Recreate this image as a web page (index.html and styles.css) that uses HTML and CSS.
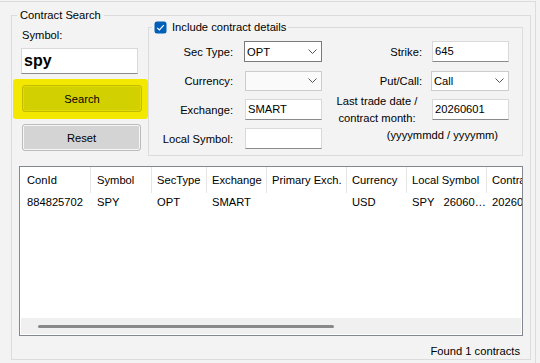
FILE: index.html
```html
<!DOCTYPE html>
<html lang="en">
<head>
  <meta charset="UTF-8">
  <title>Contract Search</title>
  <link rel="stylesheet" href="styles.css">
</head>
<body>
  <div class="window">
    <div class="group search-group">
      <div class="group-title">Contract Search</div>

      <!-- Top part: symbol box on the left, details on the right -->
      <div class="top-row">
        <div class="symbol-col">
          <label class="symbol-label" for="symbol">Symbol:</label>
          <input id="symbol" class="symbol-input" value="spy">
          <div class="marker">
            <button class="btn btn-search">Search</button>
          </div>
          <button class="btn btn-reset">Reset</button>
        </div>

        <div class="group details-group">
          <label class="group-title details-title">
            <svg class="check" width="13" height="13" viewBox="0 0 13 13">
              <rect x="0.5" y="0.5" width="12" height="12" rx="2.5" fill="#005fb8"/>
              <polyline points="3.2,6.8 5.4,9 9.8,4.2" fill="none" stroke="#fff" stroke-width="1.2"/>
            </svg>
            Include contract details
          </label>
          <div class="details-grid">
            <div class="field-label">Sec Type:</div>
            <div class="combo combo-active"><span>OPT</span><svg class="chev" width="9" height="5" viewBox="0 0 9 5"><polyline points="0.5,0.5 4.5,4.5 8.5,0.5" fill="none" stroke="#555" stroke-width="1"/></svg></div>
            <div class="field-label field-label-2">Strike:</div>
            <div class="textbox">645</div>

            <div class="field-label">Currency:</div>
            <div class="combo combo-empty"><span></span><svg class="chev" width="9" height="5" viewBox="0 0 9 5"><polyline points="0.5,0.5 4.5,4.5 8.5,0.5" fill="none" stroke="#555" stroke-width="1"/></svg></div>
            <div class="field-label field-label-2">Put/Call:</div>
            <div class="combo combo-small"><span>Call</span><svg class="chev" width="9" height="5" viewBox="0 0 9 5"><polyline points="0.5,0.5 4.5,4.5 8.5,0.5" fill="none" stroke="#555" stroke-width="1"/></svg></div>

            <div class="field-label">Exchange:</div>
            <div class="textbox textbox-col1">SMART</div>
            <div class="date-label">Last trade date /<br>contract month:</div>
            <div class="textbox">20260601</div>

            <div class="field-label">Local Symbol:</div>
            <div class="textbox textbox-col1"></div>
            <div class="hint">(yyyymmdd / yyyymm)</div>
          </div>
        </div>
      </div>

      <!-- Results list -->
      <div class="list">
        <div class="list-body">
          <table class="results">
            <thead>
              <tr>
                <th class="c-conid">ConId</th>
                <th class="c-symbol">Symbol</th>
                <th class="c-sectype">SecType</th>
                <th class="c-exch">Exchange</th>
                <th class="c-primary">Primary Exch.</th>
                <th class="c-currency">Currency</th>
                <th class="c-local">Local Symbol</th>
                <th class="c-month">Contract Month</th>
              </tr>
            </thead>
            <tbody>
              <tr>
                <td>884825702</td>
                <td>SPY</td>
                <td>OPT</td>
                <td>SMART</td>
                <td></td>
                <td>USD</td>
                <td class="pre">SPY   260601C00645000</td>
                <td>20260601</td>
              </tr>
            </tbody>
          </table>
        </div>
        <div class="hscroll"><div class="thumb"></div></div>
      </div>

      <div class="status">Found 1 contracts</div>
    </div>
  </div>
</body>
</html>
```

FILE: styles.css
```css
/* General */
body {
  margin: 0;
  background-color: #f3f3f3;
  font-family: "Liberation Sans", Arial, sans-serif;
  font-size: 11.2px;
  color: #000;
}
.window {
  margin-top: 1px;
  width: 536px;
  height: 362px;
  box-sizing: border-box;
  border-top: 1px solid #dcdcdc;
  border-right: 1px solid #dcdcdc;
  padding: 13px 0 0 11px;
}

/* Group boxes */
.group {
  position: relative;
  border: 1px solid #dcdcdc;
  box-sizing: border-box;
}
.group-title {
  position: absolute;
  top: -8px;
  line-height: 14px;
  background-color: #f3f3f3;
  padding: 0 3px;
}
.search-group {
  width: 520px;
  height: 345px;
  padding: 11px 7px 0 7px;
}
.search-group > .group-title {
  left: 5px;
}

.top-row {
  display: flex;
  height: 129px;
}

/* Symbol column */
.symbol-col {
  width: 121px;
  margin-left: 2px;
  display: flex;
  flex-direction: column;
  align-items: flex-start;
}
.symbol-label {
  margin: 1px 0 0 1px;
  line-height: 14px;
}
.symbol-input {
  margin: 6px 0 0 0;
  width: 117px;
  height: 26px;
  box-sizing: border-box;
  border: 1px solid #d9d9d9;
  border-bottom-color: #8a8a8a;
  background-color: #fff;
  padding: 0 2px;
  font: bold 16px "Liberation Sans", Arial, sans-serif;
  outline: none;
}
.marker {
  margin: 5px -6px 0 -8px;
  padding: 6px 6px 7px 9px;
  background-color: #f2e800;
  border-radius: 3px;
}
.btn {
  display: block;
  height: 27px;
  box-sizing: border-box;
  border-radius: 3px;
  padding: 0;
  font: inherit;
  color: #000;
}
.btn-search {
  width: 120px;
  background-color: #d3d000;
  border: 1px solid #c2bd00;
  box-shadow: inset 0 0 0 1px #e2dc00;
}
.btn-reset {
  margin: 5px 0 0 1px;
  width: 119px;
  background-color: #d4d4d4;
  border: 1px solid #bcbcbc;
  box-shadow: inset 0 0 0 1px #f6f6f6;
}

/* Contract details */
.details-group {
  margin-left: 6px;
  width: 375px;
  height: 129px;
}
.details-title {
  left: 3px;
  display: flex;
  align-items: center;
  gap: 5px;
  padding: 0 2px;
}
.check {
  display: block;
}
.details-grid {
  display: grid;
  grid-template-columns: 95px 78px 110px 77px;
  grid-auto-rows: 21px;
  row-gap: 8px;
  padding-top: 13px;
  align-items: center;
}
.field-label {
  text-align: right;
  padding-right: 11px;
}
.field-label-2 {
  padding-right: 10px;
}
.date-label {
  text-align: center;
  line-height: 17px;
}
.hint {
  grid-column: 3 / span 2;
  align-self: start;
  text-align: right;
  padding-right: 11px;
  line-height: 14px;
}
.textbox {
  height: 21px;
  box-sizing: border-box;
  border: 1px solid #d9d9d9;
  border-bottom-color: #8a8a8a;
  background-color: #fff;
  padding: 0 2px;
  line-height: 19px;
}
.textbox-col1 {
  margin-left: 1px;
}
.combo {
  display: flex;
  align-items: center;
  justify-content: space-between;
  height: 21px;
  box-sizing: border-box;
  border: 1px solid #cccccc;
  background-color: #fff;
  padding: 0 4px 0 2px;
}
.combo-active {
  border-color: #7a7a7a;
}
.combo-empty {
  height: 20px;
  margin-left: 1px;
  background-color: #fafafa;
}
.combo-small {
  height: 20px;
  margin-left: -1px;
}
.chev {
  display: block;
}

/* Results list */
.list {
  margin-top: 10px;
  height: 170px;
  box-sizing: border-box;
  border: 1px solid #828790;
  background-color: #fff;
  display: flex;
  flex-direction: column;
}
.list-body {
  flex: 1;
  overflow: hidden;
}
.results {
  border-collapse: collapse;
  table-layout: fixed;
  width: 567px;
}
.results th,
.results td {
  box-sizing: border-box;
  padding: 0 0 0 5px;
  text-align: left;
  font-weight: normal;
  white-space: nowrap;
  overflow: hidden;
}
.results th {
  height: 26px;
  box-shadow: inset -1px 0 0 #e5e5e5;
}
.results td {
  height: 17px;
  text-overflow: ellipsis;
}
.results th:first-child,
.results td:first-child {
  padding-left: 7px;
}
.results th:nth-child(2),
.results td:nth-child(2) {
  padding-left: 6px;
}
.results td.pre {
  white-space: pre;
}
.c-conid { width: 71px; }
.c-symbol { width: 61px; }
.c-sectype { width: 55px; }
.c-exch { width: 60px; }
.c-primary { width: 80px; }
.c-currency { width: 60px; }
.c-local { width: 80px; }
.c-month { width: 100px; }

.hscroll {
  height: 16px;
  margin: 0 1px 1px 1px;
  background-color: #f0f0f0;
  display: flex;
  align-items: center;
  padding-left: 17px;
}
.thumb {
  width: 296px;
  height: 3px;
  border-radius: 2px;
  background-color: #898989;
}

.status {
  margin-top: 8px;
  padding-right: 3px;
  text-align: right;
  line-height: 14px;
}
```
